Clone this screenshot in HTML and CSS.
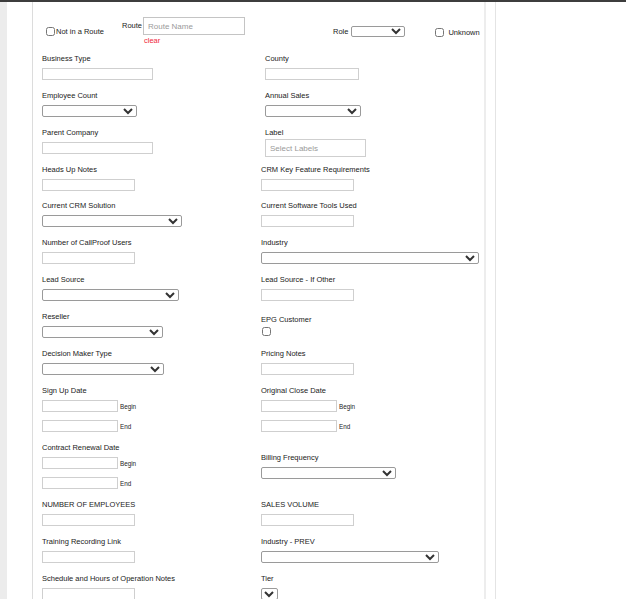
FILE: index.html
```html
<!DOCTYPE html>
<html lang="en">
<head>
  <meta charset="UTF-8" />
  <title>Contact Details</title>
  <link rel="stylesheet" href="styles.css">
</head>
<body>
  <div class="topbar"></div>
  <div class="page">
    <div class="gutter"></div>

    <div class="main">
      <div class="route-row">
        <label class="check not-route"><input type="checkbox" />Not in a Route</label>
        <div class="route">
          <span class="route-label">Route</span>
          <div class="route-box">
            <input type="text" class="route-input" placeholder="Route Name" />
            <a class="clear">clear</a>
          </div>
        </div>
        <div class="role">
          <span>Role</span>
          <select class="role-select"></select>
        </div>
        <label class="check unknown"><input type="checkbox" />Unknown</label>
      </div>

      <div class="fields">
        <div class="field">
          <label>Business Type</label>
          <input type="text" class="w110" />
        </div>
        <div class="field shift">
          <label>County</label>
          <input type="text" class="w94" />
        </div>

        <div class="field">
          <label>Employee Count</label>
          <select class="w95"></select>
        </div>
        <div class="field shift">
          <label>Annual Sales</label>
          <select class="w96"></select>
        </div>

        <div class="field">
          <label>Parent Company</label>
          <input type="text" class="w110" />
        </div>
        <div class="field shift">
          <label>Label</label>
          <input type="text" class="labels-input" placeholder="Select Labels" />
        </div>

        <div class="field tight">
          <label>Heads Up Notes</label>
          <input type="text" class="w93" />
        </div>
        <div class="field tight">
          <label>CRM Key Feature Requirements</label>
          <input type="text" class="w93" />
        </div>

        <div class="field">
          <label>Current CRM Solution</label>
          <select class="w140"></select>
        </div>
        <div class="field">
          <label>Current Software Tools Used</label>
          <input type="text" class="w93" />
        </div>

        <div class="field">
          <label>Number of CallProof Users</label>
          <input type="text" class="w93" />
        </div>
        <div class="field">
          <label>Industry</label>
          <select class="w218"></select>
        </div>

        <div class="field">
          <label>Lead Source</label>
          <select class="w137"></select>
        </div>
        <div class="field">
          <label>Lead Source - If Other</label>
          <input type="text" class="w93" />
        </div>

        <div class="field">
          <label>Reseller</label>
          <select class="w121"></select>
        </div>
        <div class="field epg">
          <label>EPG Customer</label>
          <input type="checkbox" />
        </div>

        <div class="field">
          <label>Decision Maker Type</label>
          <select class="w122"></select>
        </div>
        <div class="field">
          <label>Pricing Notes</label>
          <input type="text" class="w93" />
        </div>

        <div class="field">
          <label>Sign Up Date</label>
          <div class="date-line"><input type="text" class="w76" /><span>Begin</span></div>
          <div class="date-line"><input type="text" class="w76" /><span>End</span></div>
        </div>
        <div class="field">
          <label>Original Close Date</label>
          <div class="date-line"><input type="text" class="w76" /><span>Begin</span></div>
          <div class="date-line"><input type="text" class="w76" /><span>End</span></div>
        </div>

        <div class="field">
          <label>Contract Renewal Date</label>
          <div class="date-line"><input type="text" class="w76" /><span>Begin</span></div>
          <div class="date-line"><input type="text" class="w76" /><span>End</span></div>
        </div>
        <div class="field billing">
          <label>Billing Frequency</label>
          <select class="w135"></select>
        </div>

        <div class="field">
          <label>NUMBER OF EMPLOYEES</label>
          <input type="text" class="w93" />
        </div>
        <div class="field">
          <label>SALES VOLUME</label>
          <input type="text" class="w93" />
        </div>

        <div class="field">
          <label>Training Recording Link</label>
          <input type="text" class="w93" />
        </div>
        <div class="field">
          <label>Industry - PREV</label>
          <select class="w178"></select>
        </div>

        <div class="field">
          <label>Schedule and Hours of Operation Notes</label>
          <input type="text" class="w93" />
        </div>
        <div class="field">
          <label>Tier</label>
          <select class="w17"></select>
        </div>
      </div>
    </div>

    <div class="side"></div>
  </div>
</body>
</html>
```

FILE: styles.css
```css
* { box-sizing: border-box; }

html, body {
  margin: 0;
  background: #fff;
  font-family: "Liberation Sans", Arial, sans-serif;
  color: #222;
  overflow: hidden;
}

.topbar {
  height: 2px;
  background: #3d3d3d;
}

.page {
  display: flex;
  height: 597px;
}

.gutter {
  width: 7px;
  background: #ececec;
  margin-right: 25px;
}

.main {
  width: 455px;
  border-left: 1px solid #dcdcdc;
  border-right: 2px solid #ededed;
  padding-left: 9px;
}

.side {
  margin-left: 9px;
  width: 131px;
  border-left: 1px solid #e4e4e4;
}

input, select {
  margin: 0;
  font-family: inherit;
}

input[type="text"] {
  display: block;
  height: 12px;
  border: 1px solid #cfcfcf;
  padding: 0 3px;
  font-size: 7px;
  background: #fff;
}

select {
  display: block;
  height: 12px;
  padding: 0;
  font-size: 7px;
  border: 1px solid #9a9a9a;
  border-radius: 2px;
  background-color: #fff;
  color: #333;
}

input[type="checkbox"] {
  display: block;
  width: 9px;
  height: 9px;
  margin: 0;
}

/* top row */
.route-row {
  display: flex;
  align-items: flex-start;
  height: 52px;
  padding-top: 15px;
  font-size: 7.5px;
  line-height: 9px;
}

.check {
  display: flex;
  align-items: center;
}

.not-route {
  margin-left: 4px;
  margin-top: 10px;
  width: 76px;
}

.not-route input {
  margin-right: 1px;
}

.route {
  display: flex;
}

.route-label {
  margin-top: 4px;
  width: 21px;
}

.route-box {
  display: flex;
  flex-direction: column;
}

input.route-input {
  width: 102px;
  height: 18px;
  font-size: 8px;
  padding: 0 4px;
  border-color: #c4c4c4;
}

.route-input::placeholder,
.labels-input::placeholder {
  color: #9a9a9a;
}

.clear {
  color: #f0283c;
  margin: 1px 0 0 1px;
}

.role {
  display: flex;
  align-items: center;
  margin-left: 88px;
  margin-top: 9px;
}

.role-select {
  width: 54px;
  height: 11px;
  margin-left: 3px;
}

.unknown {
  margin-left: 30px;
  margin-top: 11px;
}

.unknown input {
  margin-right: 4px;
}

/* form grid */
.fields {
  display: grid;
  grid-template-columns: 219px 1fr;
  row-gap: 11px;
  align-items: start;
  font-size: 7.5px;
  line-height: 9px;
}

.field label {
  display: block;
  margin-bottom: 5px;
}

.field.shift {
  padding-left: 4px;
}

.field.tight {
  margin-bottom: -1px;
}

.field.epg {
  padding-top: 3px;
}

.field.epg label {
  margin-bottom: 3px;
}

.field.epg input {
  margin-left: 1px;
}

.field.billing {
  padding-top: 10px;
}

input.labels-input {
  width: 101px;
  height: 18px;
  margin: -3px 0;
  font-size: 8px;
  padding: 0 4px;
}

.date-line {
  display: flex;
  align-items: center;
}

.date-line + .date-line {
  margin-top: 8px;
}

.date-line span {
  font-size: 6.3px;
  margin-left: 2px;
}

.w17 { width: 17px; }
.w76 { width: 76px; }
.w93 { width: 93px; }
.w94 { width: 94px; }
.w95 { width: 95px; }
.w96 { width: 96px; }
.w110 { width: 111px; }
.w121 { width: 121px; }
.w122 { width: 122px; }
.w135 { width: 135px; }
.w137 { width: 137px; }
.w140 { width: 140px; }
.w178 { width: 178px; }
.w218 { width: 218px; }
```
